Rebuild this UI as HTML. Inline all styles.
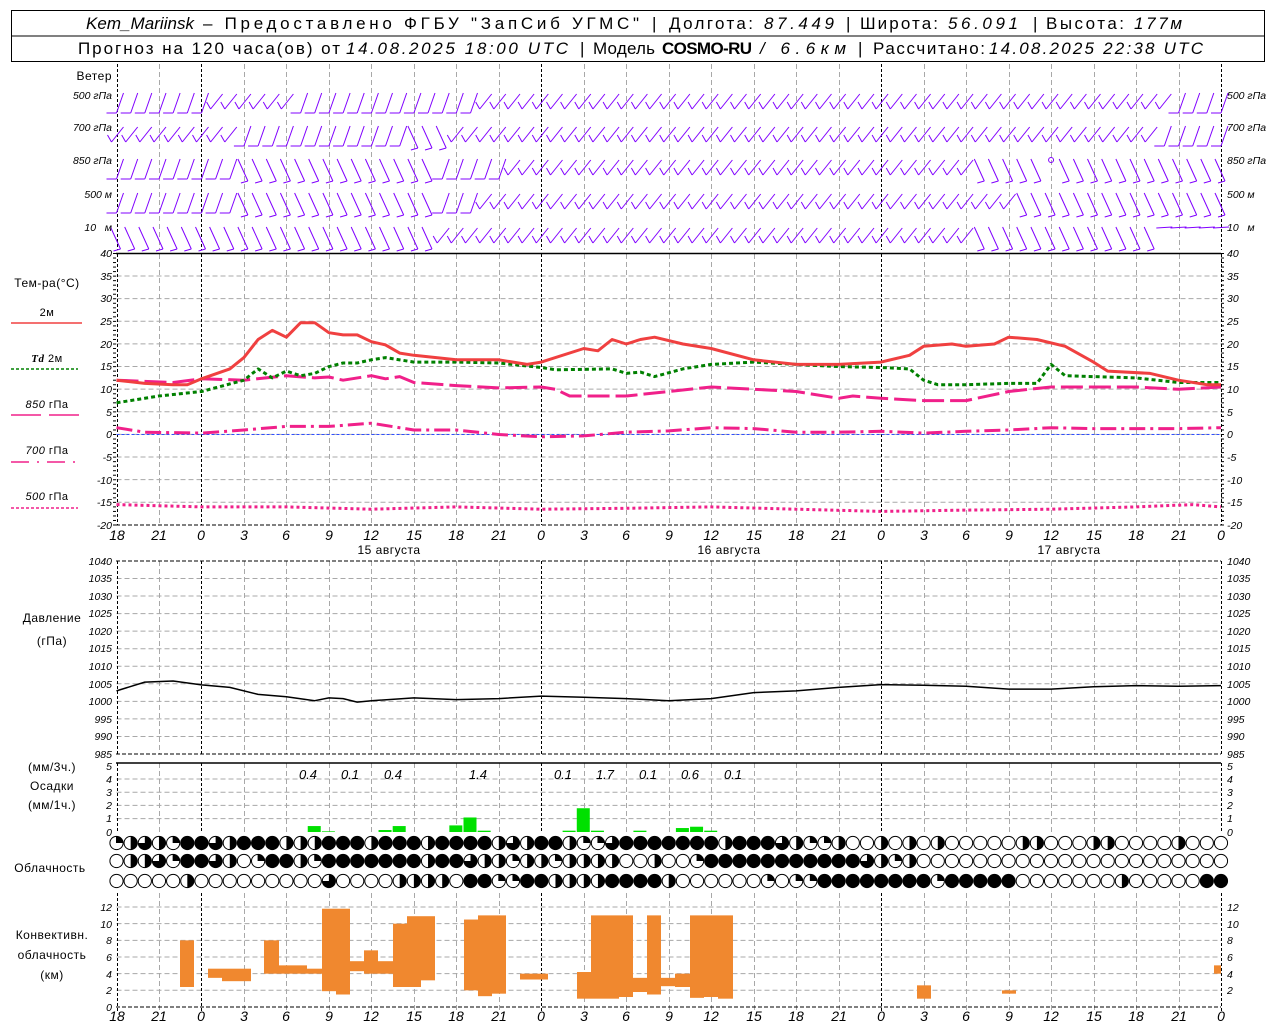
<!DOCTYPE html>
<html><head><meta charset="utf-8"><style>
html,body{margin:0;padding:0;background:#fff;width:1280px;height:1024px;overflow:hidden}
svg{display:block}
text{font-family:"Liberation Sans","DejaVu Sans",sans-serif;fill:#000}
.tk{font-size:10.5px;font-style:italic}
.lb{font-size:12px;letter-spacing:0.5px}
.ax{font-size:14px;font-style:italic}
</style></head><body>
<svg id="s" width="1280" height="1024" viewBox="0 0 1280 1024" xmlns="http://www.w3.org/2000/svg">
<g id="g"></g>
<rect x="11.5" y="10.5" width="1253" height="51" fill="none" stroke="#000"/>
<line x1="11" y1="36" x2="1265" y2="36" stroke="#000"/>
<g font-size="17">
<text x="86" y="29" font-family="Liberation Serif,serif" font-style="italic" textLength="108" lengthAdjust="spacing">Kem_Mariinsk</text>
<text x="203" y="29" textLength="436" lengthAdjust="spacing">– Предоставлено ФГБУ "ЗапСиб УГМС"</text>
<text x="652" y="29">|</text>
<text x="669" y="29" textLength="84" lengthAdjust="spacing">Долгота:</text>
<text x="764" y="29" font-style="italic" textLength="70" lengthAdjust="spacing">87.449</text>
<text x="846" y="29">|</text>
<text x="860" y="29" textLength="78" lengthAdjust="spacing">Широта:</text>
<text x="948" y="29" font-style="italic" textLength="70" lengthAdjust="spacing">56.091</text>
<text x="1033" y="29">|</text>
<text x="1046" y="29" textLength="78" lengthAdjust="spacing">Высота:</text>
<text x="1134" y="29" font-style="italic" textLength="48" lengthAdjust="spacing">177м</text>
<text x="78" y="54" textLength="262" lengthAdjust="spacing">Прогноз на 120 часа(ов) от</text>
<text x="346" y="54" font-style="italic" textLength="222" lengthAdjust="spacing">14.08.2025 18:00 UTC</text>
<text x="580" y="54">|</text>
<text x="593" y="54" textLength="62" lengthAdjust="spacing">Модель</text>
<text x="662" y="54" font-family="Liberation Mono,monospace" font-weight="bold" textLength="90" lengthAdjust="spacing">COSMO-RU</text>
<text x="760" y="54" font-style="italic" textLength="86" lengthAdjust="spacing">/ 6.6км</text>
<text x="858" y="54">|</text>
<text x="873" y="54" textLength="112" lengthAdjust="spacing">Рассчитано:</text>
<text x="989" y="54" font-style="italic" textLength="214" lengthAdjust="spacing">14.08.2025 22:38 UTC</text>
</g>
<g class="lb" text-anchor="end">
<text x="112" y="80">Ветер</text>
</g>
<g class="tk" text-anchor="end">
<text x="112" y="99">500 гПа</text><text x="112" y="131">700 гПа</text><text x="112" y="164">850 гПа</text><text x="112" y="198">500 м</text><text x="112" y="231">10 &#160; м</text>
</g>
<g class="tk">
<text x="1227" y="99">500 гПа</text><text x="1227" y="131">700 гПа</text><text x="1227" y="164">850 гПа</text><text x="1227" y="198">500 м</text><text x="1227" y="231">10 &#160; м</text>
</g>
<g class="lb" text-anchor="middle">
<text x="47" y="287">Тем-ра(°C)</text>
<text x="47" y="316" font-size="11">2м</text>
<text x="47" y="362" font-size="11"><tspan font-style="italic" font-weight="bold" font-family="Liberation Serif,serif">Td</tspan>  2м</text>
<text x="47" y="408" font-size="11"><tspan font-style="italic">850</tspan> гПа</text>
<text x="47" y="454" font-size="11"><tspan font-style="italic">700</tspan> гПа</text>
<text x="47" y="500" font-size="11"><tspan font-style="italic">500</tspan> гПа</text>
</g>
<line x1="11" y1="323" x2="82" y2="323" stroke="#f04040" stroke-width="1.5"/>
<line x1="11" y1="369" x2="78" y2="369" stroke="#008000" stroke-width="1.5" stroke-dasharray="3 2"/>
<line x1="11" y1="415" x2="82" y2="415" stroke="#f0208a" stroke-width="1.5" stroke-dasharray="30 8"/>
<line x1="11" y1="462" x2="82" y2="462" stroke="#f0208a" stroke-width="1.5" stroke-dasharray="18 8 2 8"/>
<line x1="11" y1="508" x2="78" y2="508" stroke="#f0208a" stroke-width="1.5" stroke-dasharray="3 2"/>
<g class="tk" text-anchor="end">
<text x="112" y="257">40</text><text x="112" y="280">35</text><text x="112" y="302">30</text><text x="112" y="325">25</text><text x="112" y="348">20</text><text x="112" y="370">15</text><text x="112" y="393">10</text><text x="112" y="416">5</text><text x="112" y="438">0</text><text x="112" y="461">-5</text><text x="112" y="484">-10</text><text x="112" y="506">-15</text><text x="112" y="529">-20</text>
</g>
<g class="tk">
<text x="1227" y="257">40</text><text x="1227" y="280">35</text><text x="1227" y="302">30</text><text x="1227" y="325">25</text><text x="1227" y="348">20</text><text x="1227" y="370">15</text><text x="1227" y="393">10</text><text x="1227" y="416">5</text><text x="1227" y="438">0</text><text x="1227" y="461">-5</text><text x="1227" y="484">-10</text><text x="1227" y="506">-15</text><text x="1227" y="529">-20</text>
</g>
<g class="ax" text-anchor="middle">
<text x="117" y="540">18</text><text x="159" y="540">21</text><text x="201" y="540">0</text><text x="244" y="540">3</text><text x="286" y="540">6</text><text x="329" y="540">9</text><text x="371" y="540">12</text><text x="414" y="540">15</text><text x="456" y="540">18</text><text x="499" y="540">21</text><text x="541" y="540">0</text><text x="584" y="540">3</text><text x="626" y="540">6</text><text x="669" y="540">9</text><text x="711" y="540">12</text><text x="754" y="540">15</text><text x="796" y="540">18</text><text x="839" y="540">21</text><text x="881" y="540">0</text><text x="924" y="540">3</text><text x="966" y="540">6</text><text x="1009" y="540">9</text><text x="1051" y="540">12</text><text x="1094" y="540">15</text><text x="1136" y="540">18</text><text x="1179" y="540">21</text><text x="1221" y="540">0</text>
</g>
<g class="lb" text-anchor="middle">
<text x="389" y="554">15 августа</text><text x="729" y="554">16 августа</text><text x="1069" y="554">17 августа</text>
</g>
<g class="lb" text-anchor="middle"><text x="52" y="622">Давление</text><text x="52" y="645">(гПа)</text></g>
<g class="tk" text-anchor="end">
<text x="112" y="565">1040</text><text x="112" y="582">1035</text><text x="112" y="600">1030</text><text x="112" y="617">1025</text><text x="112" y="635">1020</text><text x="112" y="652">1015</text><text x="112" y="670">1010</text><text x="112" y="688">1005</text><text x="112" y="705">1000</text><text x="112" y="723">995</text><text x="112" y="740">990</text><text x="112" y="758">985</text>
</g>
<g class="tk">
<text x="1227" y="565">1040</text><text x="1227" y="582">1035</text><text x="1227" y="600">1030</text><text x="1227" y="617">1025</text><text x="1227" y="635">1020</text><text x="1227" y="652">1015</text><text x="1227" y="670">1010</text><text x="1227" y="688">1005</text><text x="1227" y="705">1000</text><text x="1227" y="723">995</text><text x="1227" y="740">990</text><text x="1227" y="758">985</text>
</g>
<g class="lb" text-anchor="middle"><text x="52" y="771">(мм/3ч.)</text><text x="52" y="790">Осадки</text><text x="52" y="809">(мм/1ч.)</text></g>
<g class="tk" text-anchor="end">
<text x="112" y="770">5</text><text x="112" y="783">4</text><text x="112" y="796">3</text><text x="112" y="809">2</text><text x="112" y="822">1</text><text x="112" y="836">0</text>
</g>
<g class="tk">
<text x="1227" y="770">5</text><text x="1227" y="783">4</text><text x="1227" y="796">3</text><text x="1227" y="809">2</text><text x="1227" y="822">1</text><text x="1227" y="836">0</text>
</g>
<g font-size="13" font-style="italic" text-anchor="middle">
<text x="308" y="779">0.4</text><text x="350" y="779">0.1</text><text x="393" y="779">0.4</text><text x="478" y="779">1.4</text><text x="563" y="779">0.1</text><text x="605" y="779">1.7</text><text x="648" y="779">0.1</text><text x="690" y="779">0.6</text><text x="733" y="779">0.1</text>
</g>
<g class="lb" text-anchor="middle"><text x="50" y="872">Облачность</text></g>
<g class="lb" text-anchor="middle"><text x="52" y="939">Конвективн.</text><text x="52" y="959">облачность</text><text x="52" y="979">(км)</text></g>
<g class="tk" text-anchor="end">
<text x="112" y="911">12</text><text x="112" y="928">10</text><text x="112" y="944">8</text><text x="112" y="961">6</text><text x="112" y="978">4</text><text x="112" y="994">2</text><text x="112" y="1011">0</text>
</g>
<g class="tk">
<text x="1227" y="911">12</text><text x="1227" y="928">10</text><text x="1227" y="944">8</text><text x="1227" y="961">6</text><text x="1227" y="978">4</text><text x="1227" y="994">2</text>
</g>
<g class="ax" text-anchor="middle">
<text x="117" y="1021">18</text><text x="159" y="1021">21</text><text x="201" y="1021">0</text><text x="244" y="1021">3</text><text x="286" y="1021">6</text><text x="329" y="1021">9</text><text x="371" y="1021">12</text><text x="414" y="1021">15</text><text x="456" y="1021">18</text><text x="499" y="1021">21</text><text x="541" y="1021">0</text><text x="584" y="1021">3</text><text x="626" y="1021">6</text><text x="669" y="1021">9</text><text x="711" y="1021">12</text><text x="754" y="1021">15</text><text x="796" y="1021">18</text><text x="839" y="1021">21</text><text x="881" y="1021">0</text><text x="924" y="1021">3</text><text x="966" y="1021">6</text><text x="1009" y="1021">9</text><text x="1051" y="1021">12</text><text x="1094" y="1021">15</text><text x="1136" y="1021">18</text><text x="1179" y="1021">21</text><text x="1221" y="1021">0</text>
</g>
</svg>
<script>
(function(){
var NS="http://www.w3.org/2000/svg",G=document.getElementById("g");
function el(t,a){var e=document.createElementNS(NS,t);for(var k in a)e.setAttribute(k,a[k]);G.appendChild(e);return e;}
function X(h){return 116.5+h*14.16;}
function L(x1,y1,x2,y2,c,w,d){var a={x1:x1,y1:y1,x2:x2,y2:y2,stroke:c,"stroke-width":w||1};if(d)a["stroke-dasharray"]=d;el("line",a);}
var GR="#a8a8a8";
function hgrid(y0,y1,step){for(var y=y0;y<=y1+0.1;y+=step)L(116.5,y,1221,y,GR,1,"5 3");}
hgrid(276,503,22.625);
hgrid(578.5,737,17.55);
hgrid(779,819,13.2);
hgrid(907,991,16.66);
var P=[[64,250],[254,525],[561,754],[763,832],[893,1013]];
P.forEach(function(p){for(var h=0;h<=78;h+=3){var x=Math.round(X(h))+0.5;var day=(h%24==6)||h==0||h==78;L(x,p[0],x,p[1],day?"#000":GR,1,day?"3 2":"5 3");}});
L(116,253.5,1221,253.5,"#000",1.5);
L(116,561,1221,561,"#000",1,"4 2");
L(116,763,1221,763,"#000",1.5);
L(116,525,1221,525,"#000",1,"4 2");
L(116,754,1221,754,"#000",1,"4 2");
L(116,1007,1221,1007,"#000",1,"4 2");
for(var y=253.5;y<=526;y+=4.525){L(113,y,116,y,"#000");L(1221,y,1224,y,"#000");}
L(116.5,434.5,1221,434.5,"#3050ff",1,"3 2");
function Ty(t){return 253.5+(40-t)*4.525;}
function poly(d,fy,c,w,da){var s=d.map(function(p){return X(p[0]).toFixed(1)+","+fy(p[1]).toFixed(1)}).join(" ");var a={points:s,fill:"none",stroke:c,"stroke-width":w,"stroke-linejoin":"round"};if(da)a["stroke-dasharray"]=da;el("polyline",a);}
var red=[[0,12],[2,11.3],[4,11],[5,11],[6,12.3],[8,14.5],[9,17],[10,21],[11,23],[12,21.5],[13,24.7],[14,24.7],[15,22.5],[16,22],[17,22],[18,20.5],[19,19.8],[20,18],[21,17.5],[24,16.5],[27,16.5],[29,15.5],[30,16],[33,19],[34,18.5],[35,21],[36,20],[37,21],[38,21.5],[40,20],[42,19],[45,16.5],[48,15.5],[51,15.5],[54,16],[56,17.5],[57,19.5],[59,20],[60,19.5],[62,20],[63,21.5],[65,21],[67,19.5],[69,16],[70,14],[73,13.5],[75,12],[77,11],[78,11]];
var grn=[[0,7],[3,8.5],[6,9.5],[9,12],[10,14.5],[11,12.5],[12,14],[13,13],[14,13.5],[15,15],[16,15.8],[17,15.8],[18,16.5],[19,17],[21,16],[24,16],[27,15.8],[30,14.8],[31,14.3],[35,14.5],[36,13.5],[37,13.8],[38,12.8],[40,14.5],[42,15.5],[45,16],[48,15.5],[51,15],[54,14.8],[56,14.5],[57,12],[58,11],[60,11],[63,11.3],[65,11.3],[66,15.5],[67,13],[69,12.8],[72,12.5],[75,11.5],[78,11.5]];
var m85=[[0,12],[4,11.5],[6,12.3],[9,12],[12,13],[14,12.5],[15,12.7],[16,12],[18,13],[19,12.3],[20,12.8],[21,11.5],[24,10.8],[27,10.3],[30,10.5],[31,10],[32,8.5],[34,8.5],[36,8.5],[39,9.5],[42,10.5],[48,9.5],[51,8],[52,8.5],[54,8],[57,7.5],[60,7.5],[63,9.5],[66,10.5],[69,10.5],[72,10.5],[75,10],[78,10.5]];
var m70=[[0,1.5],[2,0.5],[6,0.3],[9,1],[12,1.8],[15,1.8],[18,2.5],[21,1],[24,1],[27,0],[30,-0.5],[33,-0.3],[36,0.5],[39,0.8],[42,1.5],[45,1.3],[48,0.5],[51,0.5],[54,0.7],[57,0.3],[60,0.7],[63,1],[66,1.5],[69,1.3],[72,1.3],[75,1.3],[78,1.5]];
var m50=[[0,-15.5],[6,-16],[12,-16],[18,-16.5],[24,-16],[30,-16.5],[36,-16.3],[42,-16],[48,-16.5],[54,-17],[60,-16.7],[66,-16.5],[72,-16],[76,-15.5],[78,-16]];
poly(m50,Ty,"#f0208a",3,"3 3");
poly(m70,Ty,"#f0208a",3,"16 5 3 5");
poly(m85,Ty,"#f0208a",3,"22 6");
poly(grn,Ty,"#008000",3,"4 3");
poly(red,Ty,"#f04040",3);
function Py(p){return 561+(1040-p)*3.51;}
var pr=[[0,1003],[2,1005.5],[4,1005.8],[6,1004.7],[8,1004],[10,1002],[12,1001.3],[14,1000.2],[15,1001],[16,1000.8],[17,999.8],[18,1000.2],[21,1001],[24,1000.5],[27,1000.8],[30,1001.5],[33,1001.2],[36,1000.8],[39,1000.2],[42,1000.8],[45,1002.5],[48,1003],[51,1004],[54,1004.8],[57,1004.6],[60,1004.3],[63,1003.5],[66,1003.5],[69,1004.2],[72,1004.5],[75,1004.3],[78,1004.5]];
poly(pr,Py,"#000",1.5);
var pc=[[14,0.45],[15,0.05],[19,0.15],[20,0.45],[24,0.5],[25,1.1],[26,0.1],[32,0.1],[33,1.8],[34,0.1],[37,0.1],[40,0.3],[41,0.4],[42,0.1]];
pc.forEach(function(p){var y=832-p[1]*13.2;el("rect",{x:X(p[0])-7,y:y,width:13,height:832-y,fill:"#00e000"});});
function Cy(k){return 1007-k*8.33;}
var cv=[[180,194,2.4,8],[208,222,3.5,4.6],[222,251,3.1,4.6],[264,279,4,8],[279,293,4,5],[293,307,4,5],[307,322,4,4.6],[322,336,1.9,11.8],[336,350,1.5,11.8],[350,364,4.3,5.5],[364,378,4,6.8],[378,393,4,5.5],[393,407,2.4,10],[407,421,2.4,10.9],[421,435,3.2,10.9],[464,478,2,10.5],[478,492,1.3,11],[492,506,1.6,11],[520,548,3.3,4],[577,591,1,4.2],[591,605,1,11],[605,619,1,11],[619,633,1.2,11],[633,647,1.8,3.5],[647,661,1.5,11],[661,675,2.5,3.5],[675,690,2.4,4],[690,704,1.1,11],[704,718,1.2,11],[718,733,1,11],[917,931,1,2.6],[1002,1016,1.6,2],[1214,1221,4,5]];
cv.forEach(function(c){el("rect",{x:c[0],y:Cy(c[3]),width:c[1]-c[0],height:Cy(c[2])-Cy(c[3]),fill:"#f0882f"});});
var rows=["QHTHQBBTHBBBHHHBBBHBBBHBBBBHTHBBHQQTBBBBBBBHBBBTHQQHWWHWHWHWWWWWHHWWWHHWWWWHWWWQWWWH",
"WHHTQBBTHWQBBHQBBBBBBBHBBTHHQHHQHHHHWWHWWQBBBBBBBBBBBTHQHWWWWWWWWWWWWWWWWWWWWWWWWH",
"WWWWWHWWWWWWWWWTWWWWHHHHWBBQQBBHHHHBBBBHWWWWWWQWQQBBBBBBBBQBBBBBWWWWWWWHWWWWWBBBB"];
var ry=[843,861,881];
function arc(cx,cy,r,a0,a1){var p="M"+cx+","+cy;var n=12;for(var i=0;i<=n;i++){var a=(a0+(a1-a0)*i/n)*Math.PI/180;p+=" L"+(cx+r*Math.sin(a)).toFixed(2)+","+(cy-r*Math.cos(a)).toFixed(2);}return p+"Z";}
rows.forEach(function(s,ri){for(var h=0;h<=78;h++){var c=s.charAt(h)||"W";var cx=X(h),cy=ry[ri],r=6.6;
el("circle",{cx:cx,cy:cy,r:r,fill:c=="B"?"#000":"#fff",stroke:"#000","stroke-width":1});
if(c=="H"){el("path",{d:arc(cx,cy,r,0,180),fill:"#000"});}
if(c=="Q"){el("path",{d:arc(cx,cy,r,0,90),fill:"#000"});L(cx,cy-r,cx,cy,"#000",1);}
if(c=="T"){el("path",{d:arc(cx,cy,r,0,270),fill:"#000"});}
}});
var PU="#8000ff";
function seg(x1,y1,x2,y2){L(x1.toFixed(1),y1.toFixed(1),x2.toFixed(1),y2.toFixed(1),PU,1);}
function A(x,yb){seg(x,yb,x+7,yb-20);seg(x,yb,x-10,yb);}
function B(x,yb){seg(x-5,yb+6,x+7,yb-9);seg(x-5,yb+6,x-9,yb-1);}
function C(x,yb){seg(x-6,yb-22,x+4,yb);seg(x+4,yb,x-3,yb+2);}
function Hh(x,yb){seg(x-8,yb,x+8,yb-1);}
var rowTop=[92,125,158,192,226];
function mode(r,h){
 if(r==0){if(h<=6)return"A";if(h<=12)return"B";if(h<=25)return"A";if(h>=75)return"A";return"B";}
 if(r==1){if(h<=8)return"B";if(h<=20)return"A";if(h<=23)return"C";if(h>=74)return"A";return"B";}
 if(r==2){if(h<=8)return"A";if(h<=22)return"C";if(h<=27)return"A";if(h<=60)return"B";if(h==66)return"O";return"C";}
 if(r==3){if(h<=8)return"A";if(h<=22)return"C";if(h<=25)return"A";if(h<=63)return"B";return"C";}
 if(r==4){if(h<=22)return"C";if(h<=60)return"B";if(h<=73)return"C";return"H";}
}
for(var r=0;r<5;r++){for(var h=0;h<=78;h++){var x=X(h),m=mode(r,h);var t=rowTop[r];
 if(m=="A")A(x,t+21);else if(m=="B")B(x,t+11);else if(m=="C")C(x,t+23);else if(m=="H")Hh(x,t+2);else if(m=="O")el("circle",{cx:x,cy:t+2,r:2.5,fill:"none",stroke:PU});}}
})();
</script>
</body></html>
